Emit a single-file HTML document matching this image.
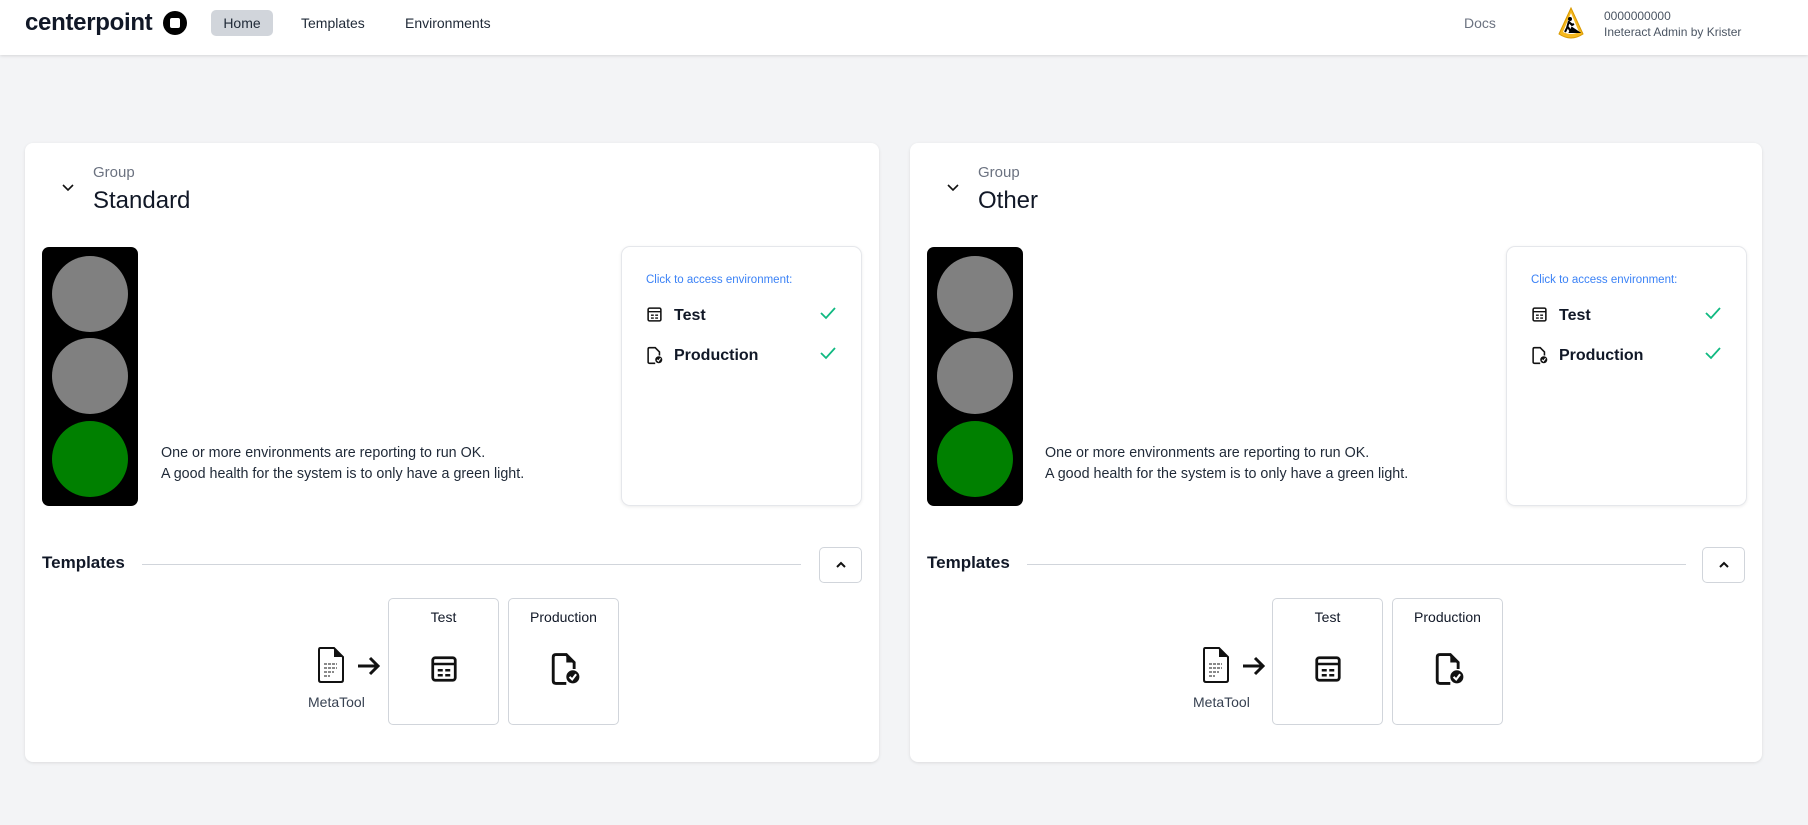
<!DOCTYPE html>
<html><head><style>
*{box-sizing:border-box;margin:0;padding:0}
body{width:1808px;height:825px;background:#f3f4f6;font-family:"Liberation Sans",sans-serif;color:#111827;position:relative;overflow:hidden}
.nav{position:absolute;left:0;top:0;width:1808px;height:55px;background:#fff;box-shadow:0 1px 3px rgba(0,0,0,.12)}
.a{position:absolute}
.card{position:absolute;top:143px;height:619px;background:#fff;border-radius:8px;box-shadow:0 1px 3px rgba(0,0,0,.1)}
.light{left:17px;top:104px;width:96px;height:259px;background:#000;border-radius:7px}
.c{position:absolute;left:10px;width:76px;height:76px;border-radius:50%;background:#808080}
.env{left:596px;top:103px;width:241px;height:260px;border:1px solid #e5e7eb;border-radius:9px;box-shadow:0 1px 3px rgba(0,0,0,.08)}
.tb{width:111px;height:127px;border:1px solid #d1d5db;border-radius:5px;top:455px;text-align:center;font-size:14px;padding-top:10px}
</style></head><body>
<div class="nav">
 <div class="a" style="left:25px;top:9px;font-size:24px;font-weight:bold;letter-spacing:-0.3px">centerpoint</div>
 <div class="a" style="left:163px;top:11px;width:24px;height:24px;border-radius:50%;background:#000"><div class="a" style="left:7px;top:7px;width:10px;height:10px;background:#fff;border-radius:2px"></div></div>
 <div class="a" style="left:211px;top:10px;width:62px;height:26px;background:#d1d5db;border-radius:5px;font-size:14px;text-align:center;line-height:26px;color:#1f2937">Home</div>
 <div class="a" style="left:301px;top:15px;font-size:14px;color:#1f2937">Templates</div>
 <div class="a" style="left:405px;top:15px;font-size:14px;color:#1f2937">Environments</div>
 <div class="a" style="left:1464px;top:15px;font-size:14px;color:#6b7280">Docs</div>
 <svg class="a" style="left:1557px;top:6px" width="28" height="34" viewBox="0 0 28 34"><path d="M14 2 L26 28 Q14 36 2 28 Z" fill="#f5b820" stroke="#d99a00"/><path d="M14 7 L22 26 Q14 30 6 26Z" fill="#fff"/><circle cx="13" cy="13" r="2" fill="#000"/><path d="M12 15 L10 22 L8 26 M12 16 L15 19 L17 18 M11 21 L14 26 M15 22 L21 26 L13 26Z" stroke="#000" stroke-width="2" fill="#000"/></svg>
 <div class="a" style="left:1604px;top:8px;font-size:12px;color:#4b5563;line-height:16px">0000000000<br>Ineteract Admin by Krister</div>
</div>

<div class="card" style="left:25px;width:854px">
 <svg class="a" style="left:36px;top:40px" width="14" height="10" viewBox="0 0 14 10"><path d="M2 2 L7 7 L12 2" stroke="#111" stroke-width="1.6" fill="none"/></svg>
 <div class="a" style="left:68px;top:21px;font-size:15px;color:#6b7280">Group</div>
 <div class="a" style="left:68px;top:44px;font-size:24px">Standard</div>
 <div class="a light"><div class="c" style="top:9px"></div><div class="c" style="top:91px"></div><div class="c" style="top:174px;background:#008000"></div></div>
 <div class="a" style="left:136px;top:300px;font-size:14.3px;line-height:21px;color:#1f2937">One or more environments are reporting to run OK.<br>A good health for the system is to only have a green light.</div>
 <div class="a env">
  <div class="a" style="left:24px;top:27px;font-size:11.5px;color:#3b82f6">Click to access environment:</div>
  <svg class="a" style="left:24px;top:59px" width="17" height="17" viewBox="0 0 24 24"><rect x="3" y="3" width="18" height="18" rx="2" stroke="#111" stroke-width="2.2" fill="none"/><path d="M3 8h18M7 13h4M13 13h4M7 17h4M13 17h4" stroke="#111" stroke-width="2"/></svg>
  <div class="a" style="left:52px;top:60px;font-size:16px;font-weight:bold">Test</div>
  <svg class="a" style="left:198px;top:59px" width="16" height="14" viewBox="0 0 16 14"><path d="M1 7 L6 12 L15 2" stroke="#10b981" stroke-width="1.8" fill="none"/></svg>
  <svg class="a" style="left:24px;top:99px" width="17" height="19" viewBox="0 0 24 26"><path d="M13 24 H5 Q3 24 3 22 V4 Q3 2 5 2 H13 L19 8 V13" stroke="#111" stroke-width="2.2" fill="none"/><circle cx="18" cy="19" r="5" fill="#111"/><path d="M15.5 19 L17.5 21 L20.5 17" stroke="#fff" stroke-width="1.6" fill="none"/></svg>
  <div class="a" style="left:52px;top:100px;font-size:16px;font-weight:bold">Production</div>
  <svg class="a" style="left:198px;top:99px" width="16" height="14" viewBox="0 0 16 14"><path d="M1 7 L6 12 L15 2" stroke="#10b981" stroke-width="1.8" fill="none"/></svg>
 </div>
 <div class="a" style="left:17px;top:410px;font-size:17px;font-weight:bold">Templates</div>
 <div class="a" style="left:117px;top:421px;width:659px;height:1px;background:#d1d5db"></div>
 <div class="a" style="left:794px;top:404px;width:43px;height:36px;border:1px solid #d1d5db;border-radius:5px"><svg class="a" style="left:15px;top:13px" width="12" height="8" viewBox="0 0 12 8"><path d="M2 6 L6 2 L10 6" stroke="#111" stroke-width="2" fill="none"/></svg></div>
 <svg class="a" style="left:291px;top:503px" width="30" height="38" viewBox="0 0 30 38"><path d="M4 2 H18 L27 11 V34 Q27 36 25 36 H5 Q3 36 3 34 V4 Q3 2 4 2Z" stroke="#111" stroke-width="2" fill="none"/><path d="M18 2 V11 H27" fill="#111"/><path d="M8 18h13M8 22h13M8 26h10M8 30h6" stroke="#444" stroke-width="1.3" stroke-dasharray="3 1"/></svg>
 <svg class="a" style="left:331px;top:512px" width="26" height="22" viewBox="0 0 26 22"><path d="M2 11 H22 M14 3 L22 11 L14 19" stroke="#111" stroke-width="3" fill="none"/></svg>
 <div class="a" style="left:283px;top:551px;font-size:14px;color:#374151">MetaTool</div>
 <div class="a tb" style="left:363px">Test<svg class="a" style="left:40px;top:55px" width="30" height="30" viewBox="0 0 24 24"><rect x="3" y="3" width="18" height="18" rx="2" stroke="#111" stroke-width="2.2" fill="none"/><path d="M3 8h18M7 13h4M13 13h4M7 17h4M13 17h4" stroke="#111" stroke-width="2"/></svg></div>
 <div class="a tb" style="left:483px">Production<svg class="a" style="left:40px;top:53px" width="32" height="34" viewBox="0 0 24 26"><path d="M13 24 H5 Q3 24 3 22 V4 Q3 2 5 2 H13 L19 8 V13" stroke="#111" stroke-width="2.2" fill="none"/><path d="M13 2 V8 H19Z" fill="#111"/><circle cx="18" cy="19" r="5" fill="#111"/><path d="M15.5 19 L17.5 21 L20.5 17" stroke="#fff" stroke-width="1.6" fill="none"/></svg></div>
</div>

<div class="card" style="left:910px;width:852px">
 <svg class="a" style="left:36px;top:40px" width="14" height="10" viewBox="0 0 14 10"><path d="M2 2 L7 7 L12 2" stroke="#111" stroke-width="1.6" fill="none"/></svg>
 <div class="a" style="left:68px;top:21px;font-size:15px;color:#6b7280">Group</div>
 <div class="a" style="left:68px;top:44px;font-size:24px">Other</div>
 <div class="a light"><div class="c" style="top:9px"></div><div class="c" style="top:91px"></div><div class="c" style="top:174px;background:#008000"></div></div>
 <div class="a" style="left:135px;top:300px;font-size:14.3px;line-height:21px;color:#1f2937">One or more environments are reporting to run OK.<br>A good health for the system is to only have a green light.</div>
 <div class="a env">
  <div class="a" style="left:24px;top:27px;font-size:11.5px;color:#3b82f6">Click to access environment:</div>
  <svg class="a" style="left:24px;top:59px" width="17" height="17" viewBox="0 0 24 24"><rect x="3" y="3" width="18" height="18" rx="2" stroke="#111" stroke-width="2.2" fill="none"/><path d="M3 8h18M7 13h4M13 13h4M7 17h4M13 17h4" stroke="#111" stroke-width="2"/></svg>
  <div class="a" style="left:52px;top:60px;font-size:16px;font-weight:bold">Test</div>
  <svg class="a" style="left:198px;top:59px" width="16" height="14" viewBox="0 0 16 14"><path d="M1 7 L6 12 L15 2" stroke="#10b981" stroke-width="1.8" fill="none"/></svg>
  <svg class="a" style="left:24px;top:99px" width="17" height="19" viewBox="0 0 24 26"><path d="M13 24 H5 Q3 24 3 22 V4 Q3 2 5 2 H13 L19 8 V13" stroke="#111" stroke-width="2.2" fill="none"/><circle cx="18" cy="19" r="5" fill="#111"/><path d="M15.5 19 L17.5 21 L20.5 17" stroke="#fff" stroke-width="1.6" fill="none"/></svg>
  <div class="a" style="left:52px;top:100px;font-size:16px;font-weight:bold">Production</div>
  <svg class="a" style="left:198px;top:99px" width="16" height="14" viewBox="0 0 16 14"><path d="M1 7 L6 12 L15 2" stroke="#10b981" stroke-width="1.8" fill="none"/></svg>
 </div>
 <div class="a" style="left:17px;top:410px;font-size:17px;font-weight:bold">Templates</div>
 <div class="a" style="left:117px;top:421px;width:659px;height:1px;background:#d1d5db"></div>
 <div class="a" style="left:792px;top:404px;width:43px;height:36px;border:1px solid #d1d5db;border-radius:5px"><svg class="a" style="left:15px;top:13px" width="12" height="8" viewBox="0 0 12 8"><path d="M2 6 L6 2 L10 6" stroke="#111" stroke-width="2" fill="none"/></svg></div>
 <svg class="a" style="left:291px;top:503px" width="30" height="38" viewBox="0 0 30 38"><path d="M4 2 H18 L27 11 V34 Q27 36 25 36 H5 Q3 36 3 34 V4 Q3 2 4 2Z" stroke="#111" stroke-width="2" fill="none"/><path d="M18 2 V11 H27" fill="#111"/><path d="M8 18h13M8 22h13M8 26h10M8 30h6" stroke="#444" stroke-width="1.3" stroke-dasharray="3 1"/></svg>
 <svg class="a" style="left:331px;top:512px" width="26" height="22" viewBox="0 0 26 22"><path d="M2 11 H22 M14 3 L22 11 L14 19" stroke="#111" stroke-width="3" fill="none"/></svg>
 <div class="a" style="left:283px;top:551px;font-size:14px;color:#374151">MetaTool</div>
 <div class="a tb" style="left:362px">Test<svg class="a" style="left:40px;top:55px" width="30" height="30" viewBox="0 0 24 24"><rect x="3" y="3" width="18" height="18" rx="2" stroke="#111" stroke-width="2.2" fill="none"/><path d="M3 8h18M7 13h4M13 13h4M7 17h4M13 17h4" stroke="#111" stroke-width="2"/></svg></div>
 <div class="a tb" style="left:482px">Production<svg class="a" style="left:40px;top:53px" width="32" height="34" viewBox="0 0 24 26"><path d="M13 24 H5 Q3 24 3 22 V4 Q3 2 5 2 H13 L19 8 V13" stroke="#111" stroke-width="2.2" fill="none"/><path d="M13 2 V8 H19Z" fill="#111"/><circle cx="18" cy="19" r="5" fill="#111"/><path d="M15.5 19 L17.5 21 L20.5 17" stroke="#fff" stroke-width="1.6" fill="none"/></svg></div>
</div>
</body></html>
